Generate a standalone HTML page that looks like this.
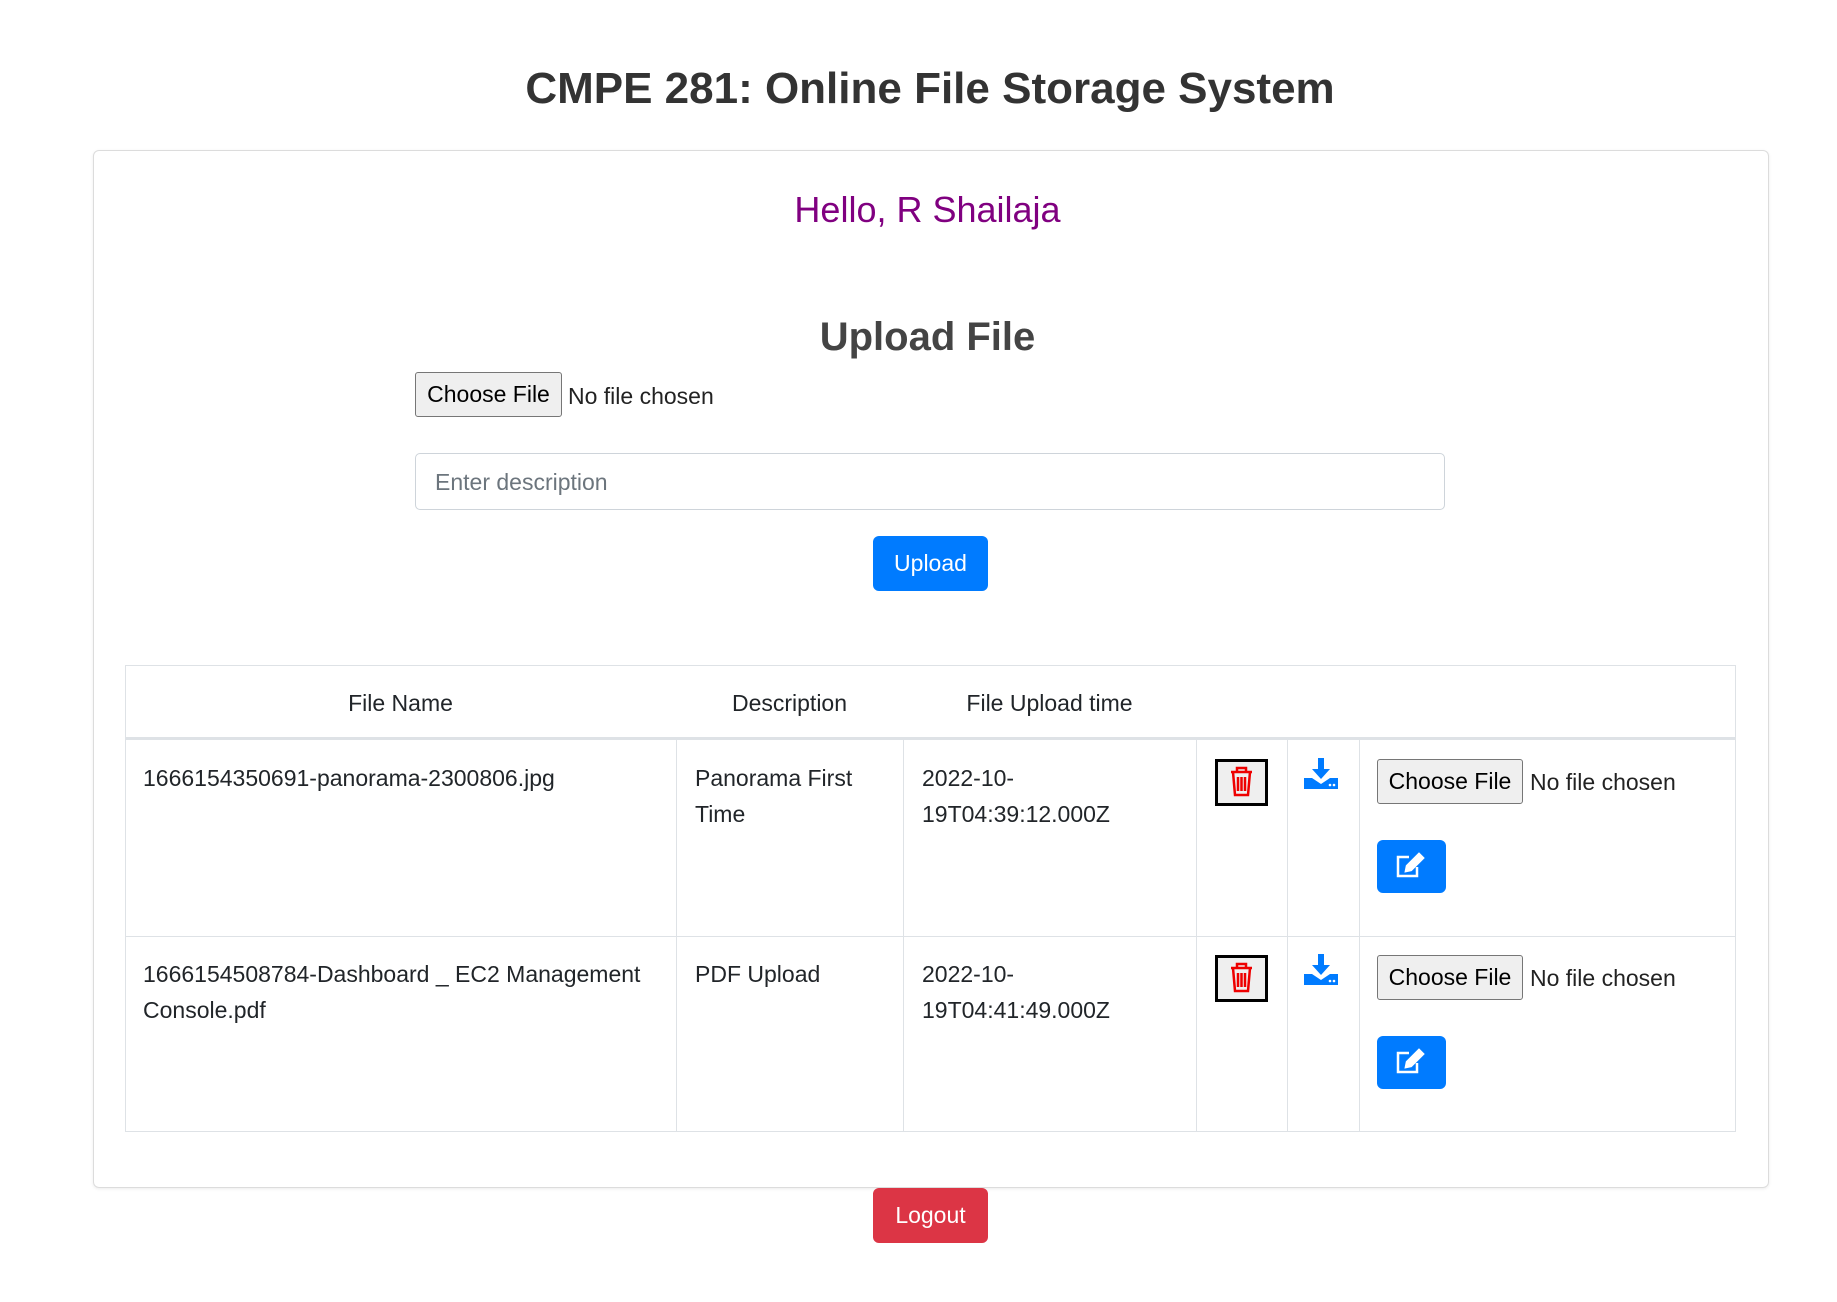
<!DOCTYPE html>
<html><head><meta charset="utf-8"><style>
body{margin:0;width:1837px;height:1302px;background:#fff;font-family:"Liberation Sans",sans-serif;color:#212529;position:relative;overflow:hidden}
.a{position:absolute}
.t{font-size:23px;line-height:36px}
.card{left:93px;top:150px;width:1674px;height:1036px;border:1px solid #dcdcdc;border-radius:6px;box-shadow:0 1px 3px rgba(0,0,0,.08)}
.fb{background:#efefef;border:1px solid #767676;border-radius:3px;font-size:23px;color:#000;text-align:center;box-sizing:border-box}
.vl{width:1px;background:#dee2e6}
.hl{height:1px;background:#dee2e6}
.btn{background:#007bff;border-radius:6px;color:#fff;text-align:center}
.trash{width:53px;height:47px;box-sizing:border-box;border:3px solid #000;background:#efefef}
</style></head><body>
<div class="a" style="left:0;width:1860px;top:59px;text-align:center;font-size:44px;line-height:60px;font-weight:bold;color:#333">CMPE 281: Online File Storage System</div>
<div class="a card"></div>
<div class="a" style="left:0;width:1855px;top:187px;text-align:center;font-size:36px;line-height:46px;color:#800080">Hello, R Shailaja</div>
<div class="a" style="left:0;width:1855px;top:312px;text-align:center;font-size:40px;line-height:50px;font-weight:bold;color:#444">Upload File</div>
<div class="a fb" style="left:415px;top:372px;width:147px;height:45px;line-height:43px">Choose File</div>
<div class="a t" style="left:568px;top:378px;color:#222">No file chosen</div>
<div class="a" style="left:415px;top:453px;width:1030px;height:57px;border:1px solid #ced4da;border-radius:5px;box-sizing:border-box"></div>
<div class="a t" style="left:435px;top:464px;color:#6c757d">Enter description</div>
<div class="a btn t" style="left:873px;top:536px;width:115px;height:55px;line-height:55px">Upload</div>

<div class="a" style="left:125px;top:665px;width:1611px;height:467px;border:1px solid #dee2e6;box-sizing:border-box"></div>
<div class="a" style="left:125px;top:737px;width:1611px;height:3px;background:#dee2e6"></div>
<div class="a hl" style="left:125px;top:936px;width:1611px"></div>
<div class="a vl" style="left:676px;top:740px;height:392px"></div>
<div class="a vl" style="left:903px;top:740px;height:392px"></div>
<div class="a vl" style="left:1196px;top:740px;height:392px"></div>
<div class="a vl" style="left:1287px;top:740px;height:392px"></div>
<div class="a vl" style="left:1359px;top:740px;height:392px"></div>

<div class="a t" style="left:125px;width:551px;top:685px;text-align:center">File Name</div>
<div class="a t" style="left:676px;width:227px;top:685px;text-align:center">Description</div>
<div class="a t" style="left:903px;width:293px;top:685px;text-align:center">File Upload time</div>

<div class="a t" style="left:143px;top:760px">1666154350691-panorama-2300806.jpg</div>
<div class="a t" style="left:695px;top:760px;width:190px">Panorama First<br>Time</div>
<div class="a t" style="left:922px;top:760px">2022-10-<br>19T04:39:12.000Z</div>

<div class="a t" style="left:143px;top:956px;white-space:nowrap">1666154508784-Dashboard _ EC2 Management<br>Console.pdf</div>
<div class="a t" style="left:695px;top:956px">PDF Upload</div>
<div class="a t" style="left:922px;top:956px">2022-10-<br>19T04:41:49.000Z</div>

<div class="a trash" style="left:1215px;top:759px"><svg width="47" height="41" viewBox="0 0 47 41"><g fill="none" stroke="#e00" stroke-width="2.5"><path d="M13 10h21M19 10V6h9v4M15 10l2 23h13l2-23"/><path d="M20 15v14M23.5 15v14M27 15v14"/></g></svg></div>
<div class="a trash" style="left:1215px;top:955px"><svg width="47" height="41" viewBox="0 0 47 41"><g fill="none" stroke="#e00" stroke-width="2.5"><path d="M13 10h21M19 10V6h9v4M15 10l2 23h13l2-23"/><path d="M20 15v14M23.5 15v14M27 15v14"/></g></svg></div>
<svg class="a" style="left:1303px;top:757px" width="36" height="34" viewBox="0 0 36 34"><path fill="#007bff" d="M15 1h6v11h6l-9 10-9-10h6z M1 21h8l9 6 9-6h8v11H1z"/><circle cx="27" cy="28" r="1.3" fill="#fff"/><circle cx="31" cy="28" r="1.3" fill="#fff"/></svg>
<svg class="a" style="left:1303px;top:953px" width="36" height="34" viewBox="0 0 36 34"><path fill="#007bff" d="M15 1h6v11h6l-9 10-9-10h6z M1 21h8l9 6 9-6h8v11H1z"/><circle cx="27" cy="28" r="1.3" fill="#fff"/><circle cx="31" cy="28" r="1.3" fill="#fff"/></svg>

<div class="a fb" style="left:1377px;top:759px;width:146px;height:45px;line-height:43px">Choose File</div>
<div class="a t" style="left:1530px;top:764px;color:#222">No file chosen</div>
<div class="a fb" style="left:1377px;top:955px;width:146px;height:45px;line-height:43px">Choose File</div>
<div class="a t" style="left:1530px;top:960px;color:#222">No file chosen</div>

<div class="a btn" style="left:1377px;top:840px;width:69px;height:53px"><svg width="69" height="53" viewBox="0 0 69 53"><g fill="none" stroke="#fff" stroke-width="2.5"><path d="M32 17h-11v19h19v-9"/><path d="M29 31l1-5 12-12 4 4-12 12z" fill="#fff"/></g></svg></div>
<div class="a btn" style="left:1377px;top:1036px;width:69px;height:53px"><svg width="69" height="53" viewBox="0 0 69 53"><g fill="none" stroke="#fff" stroke-width="2.5"><path d="M32 17h-11v19h19v-9"/><path d="M29 31l1-5 12-12 4 4-12 12z" fill="#fff"/></g></svg></div>

<div class="a t" style="left:873px;top:1188px;width:115px;height:55px;line-height:55px;background:#dc3545;color:#fff;text-align:center;border-radius:6px">Logout</div>
</body></html>
